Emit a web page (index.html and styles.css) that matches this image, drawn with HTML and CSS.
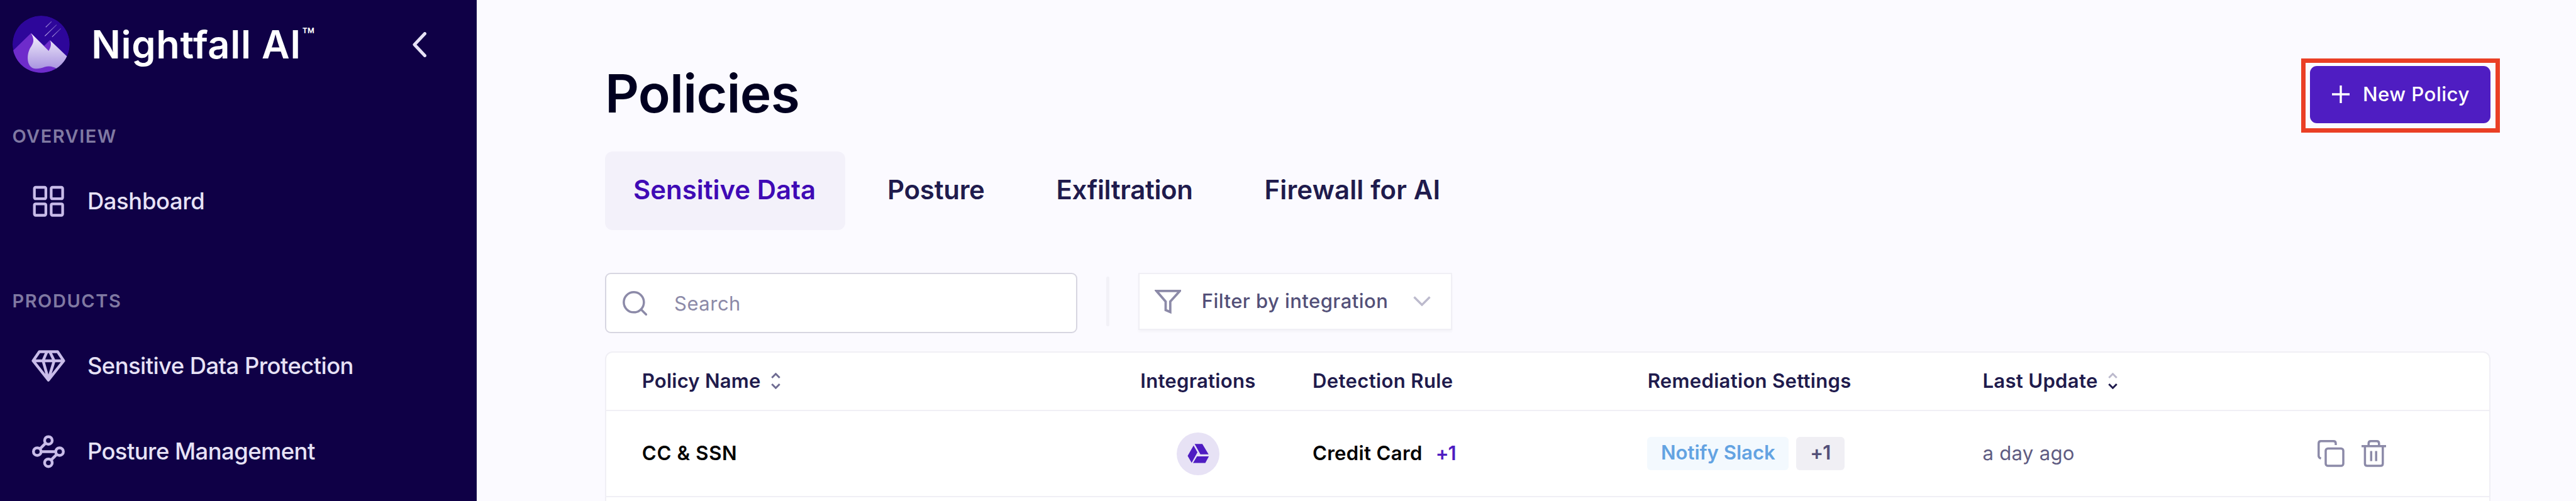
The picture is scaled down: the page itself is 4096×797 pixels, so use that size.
FILE: index.html
```html
<!DOCTYPE html>
<html lang="en">
<head>
<meta charset="utf-8">
<title>Policies – Nightfall AI</title>
<link rel="stylesheet" href="styles.css">
</head>
<body>
<div class="app">
  <aside class="sidebar">
    <header class="brand">
      <svg class="brand-logo" viewBox="24 32 384 384">
        <defs>
          <linearGradient id="snow" x1="0" y1="0" x2="0" y2="1"><stop offset="0" stop-color="#f6f3fd"/><stop offset="1" stop-color="#a994e0"/></linearGradient>
          <linearGradient id="trail" gradientUnits="userSpaceOnUse" x1="255" y1="160" x2="330" y2="90"><stop offset="0" stop-color="#b7a4e6"/><stop offset="1" stop-color="#5a3db4"/></linearGradient>
          <clipPath id="disc"><circle cx="216" cy="224" r="192"/></clipPath>
        </defs>
        <g clip-path="url(#disc)">
          <circle cx="216" cy="224" r="192" fill="#2d069a"/>
          <path d="M24 270L148 149L200 200L237 234L275 196L300 230V380L320 390V420H24z" fill="#6e2ccb"/>
          <path d="M148 149L267 269C282 240 286 225 277 198L390 306Q370 355 322 390C300 375 270 366 240 377C210 388 190 392 165 386C120 372 116 300 142 250C160 222 178 200 148 149z" fill="url(#snow)"/>
          <path d="M247 109L286 71M241 169L320 93M290 174L348 118" stroke="url(#trail)" stroke-width="5" fill="none"/>
        </g>
      </svg>
      <span class="brand-name">Nightfall AI</span><span class="brand-tm">™</span>
      <svg class="collapse" viewBox="0 0 22 40"><path d="M19.5 2.5L3 20L19.5 37.5"/></svg>
    </header>
    <h2 class="nav-label">OVERVIEW</h2>
    <a class="nav-item nav-dashboard">
      <svg class="nav-icon" viewBox="0 0 54.4 54.4"><g><rect x="4.7" y="5" width="18.2" height="18.2" rx="2"/><rect x="31.4" y="5" width="18.2" height="18.2" rx="2"/><rect x="4.7" y="31.3" width="18.2" height="18.2" rx="2"/><rect x="31.4" y="31.3" width="18.2" height="18.2" rx="2"/></g></svg>
      <span>Dashboard</span>
    </a>
    <h2 class="nav-label nav-label-products">PRODUCTS</h2>
    <a class="nav-item">
      <svg class="nav-icon wide" viewBox="30 40 230 230"><path d="M83 59H206L247 120L144 250L41 120zM41 120H247M133 62L108 120L144 246L183 120L155 62"/></svg>
      <span class="tight">Sensitive Data Protection</span>
    </a>
    <a class="nav-item">
      <svg class="nav-icon wide" viewBox="30 610 230 230"><circle cx="144" cy="651" r="25.5"/><circle cx="69" cy="726" r="25.5"/><circle cx="219" cy="726" r="25.5"/><circle cx="144" cy="801" r="25.5"/><path d="M126 669L87 708M95 726H193M201 744L162 783"/></svg>
      <span class="tight">Posture Management</span>
    </a>
  </aside>

  <main class="main">
    <div class="page-head">
      <h1>Policies</h1>
      <button class="new-policy">
        <svg class="plus" viewBox="0 0 28 28"><path d="M14 0V28M0 14H28"/></svg>
        <span>New Policy</span>
      </button>
    </div>

    <nav class="tabs">
      <a class="tab active">Sensitive Data</a>
      <a class="tab posture">Posture</a>
      <a class="tab exfil">Exfiltration</a>
      <a class="tab firewall">Firewall for AI</a>
    </nav>

    <div class="toolbar">
      <div class="search">
        <svg class="search-icon" viewBox="0 0 40 40"><circle cx="18.3" cy="18.3" r="16.4"/><path d="M30 30L38.3 38.3"/></svg>
        <span>Search</span>
      </div>
      <div class="divider"></div>
      <div class="filter">
        <svg class="funnel" viewBox="30 110 180 175"><path d="M42 126H200L135 198V268L104 255V198z"/></svg>
        <span>Filter by integration</span>
        <svg class="chevron" viewBox="0 0 28 16"><path d="M1.5 1.5L14 14L26.5 1.5"/></svg>
      </div>
    </div>

    <section class="table">
      <div class="row head">
        <div class="cell"><span class="t-name">Policy Name</span>
          <svg class="sort" viewBox="0 0 15 26"><path d="M1.3 8L7.5 1.8L13.7 8M1.3 18L7.5 24.2L13.7 18" stroke="#706d93"/></svg></div>
        <div class="cell t-int">Integrations</div>
        <div class="cell t-rule">Detection Rule</div>
        <div class="cell t-rem">Remediation Settings</div>
        <div class="cell"><span class="t-upd">Last Update</span>
          <svg class="sort" viewBox="0 0 15 26"><path d="M1.3 8L7.5 1.8L13.7 8" stroke="#bcbacd"/><path d="M1.3 18L7.5 24.2L13.7 18" stroke="#1f1b4d"/></svg></div>
        <div></div>
      </div>
      <div class="row body">
        <div class="cell t-cc">CC &amp; SSN</div>
        <div class="cell"><div class="app-badge"><svg viewBox="240 1150 155 145"><path d="M293 1159H345L387 1229H332zM286 1170L312 1215L273 1286L246 1240zM309 1243H389L365 1288H282z"/></svg></div></div>
        <div class="cell"><span class="t-card">Credit Card</span><span class="more">+1</span></div>
        <div class="cell"><span class="chip slack">Notify Slack</span><span class="chip count">+1</span></div>
        <div class="cell date">a day ago</div>
        <div class="cell actions">
          <svg class="act" viewBox="0 0 43 43"><path d="M29 8V5.5Q29 1.8 25.3 1.8H5.5Q1.8 1.8 1.8 5.5V25.3Q1.8 28 5.5 29.5"/><rect x="13" y="13.5" width="28" height="27.6" rx="3.6"/></svg>
          <svg class="act trash" viewBox="0 0 39 43"><path d="M0 9.7H39M11.2 9V5.5Q11.2 1.8 14.9 1.8H24.1Q27.8 1.8 27.8 5.5V9M5.4 10V37.5Q5.4 41.1 9 41.1H30.2Q33.8 41.1 33.8 37.5V10M15.3 17.5V33.5M23.2 17.5V33.5"/></svg>
        </div>
      </div>
      <div class="row rest"></div>
    </section>
  </main>
</div>
</body>
</html>
```
FILE: styles.css
```css
* { box-sizing: border-box; }
body { margin: 0; background: #fbfaff; font-family: Inter, "Liberation Sans", sans-serif; font-weight: 500; }
svg { display: block; flex: none; fill: none; }
h1, h2 { margin: 0; }
span { white-space: nowrap; }
.app { display: flex; width: 4096px; height: 797px; overflow: hidden; }

.sidebar { flex: none; width: 757.5px; background: #0f0046; display: flex; flex-direction: column; }
.brand { height: 141.4px; flex: none; display: flex; align-items: center; padding-left: 20px; }
.brand-logo { width: 90.8px; height: 90.8px; }
.brand-name { margin-left: 34.4px; font-size: 61.3px; font-weight: 600; letter-spacing: .7px; color: #fff; }
.brand-tm { margin: 0 auto 0 1px; font-size: 33px; line-height: 36px; color: #fff; padding-bottom: 29px; }
.collapse { width: 22px; height: 40px; margin-right: 79.5px; }
.collapse path { stroke: #e7e2f6; stroke-width: 5; stroke-linecap: round; stroke-linejoin: round; }
.nav-label { height: 60px; line-height: 61px; margin-top: 45.1px; padding-left: 19.4px; font-size: 29px; font-weight: 600; letter-spacing: 1.5px; color: #8079a2; }
.nav-label-products { margin-top: 59px; letter-spacing: 1.55px; }
.nav-item { height: 136.2px; display: flex; align-items: center; padding-left: 49.6px; gap: 34.9px; font-size: 36.4px; letter-spacing: -.35px; color: #e7e2f6; }
.nav-dashboard { margin-top: 5.9px; }
.nav-label-products + .nav-item { margin-top: 6.5px; }
.tight { letter-spacing: -.55px; }
.nav-icon { width: 54.4px; height: 54.4px; stroke: #c9bce9; stroke-width: 4.3; stroke-linejoin: round; }
.nav-icon.wide { stroke-width: 19; }

.main { flex: 1; display: flex; flex-direction: column; padding: 0 136.3px 0 204.5px; }
.page-head { display: flex; justify-content: space-between; align-items: flex-start; height: 240.9px; }
h1 { font-size: 83.9px; line-height: 100px; font-weight: 600; letter-spacing: -.75px; color: #010020; margin-top: 99px; margin-left: 0; }
.new-policy { position: relative; margin-top: 104.7px; width: 286.9px; height: 91px; border: 0; border-radius: 11px; background: #4f1dc2; color: #fff; font: 500 31.2px/40px Inter, sans-serif; display: flex; align-items: center; padding: 0 0 1px 35px; gap: 21.2px; letter-spacing: .45px; }
.new-policy::after { content: ""; position: absolute; inset: -11.8px -14.9px -15.8px -13.6px; border: 7.1px solid #ea3f25; }
.plus { width: 28px; height: 28px; stroke: #fff; stroke-width: 3.4; }

.tabs { display: flex; height: 125px; font-size: 41.95px; font-weight: 600; color: #1f1b4d; }
.tab { height: 125px; display: flex; align-items: center; padding: 0 45.4px 4px; border-radius: 12px; white-space: nowrap; }
.tab.active { width: 381.5px; margin-right: 22.2px; padding-left: 45px; background: #f3f1fa; color: #3f0ab5; }
.tab.posture { width: 246.3px; margin-right: 22.2px; letter-spacing: -.25px; }
.tab.exfil { width: 307.5px; margin-right: 23.5px; letter-spacing: -.35px; }
.tab.firewall { letter-spacing: .15px; }

.toolbar { display: flex; align-items: flex-start; margin-top: 68.1px; height: 124.9px; font-size: 31px; }
.search { width: 751.4px; height: 96.4px; border: 2.8px solid #d7d6e1; border-radius: 9px; background: #fff; display: flex; align-items: center; padding-left: 25.9px; gap: 43.2px; color: #8c8aa8; font-weight: 400; letter-spacing: .5px; }
.search-icon { width: 39px; height: 39px; stroke: #8c8aa8; stroke-width: 3.6; stroke-linecap: round; }
.divider { margin: 5.6px 45.2px 0 45.3px; width: 5.7px; height: 79.4px; border-radius: 3px; background: #f2f1f7; }
.filter { width: 499.6px; height: 90.7px; border: 2.8px solid #f0eff5; background: #fff; box-shadow: 0 3px 4px rgba(31, 27, 77, .03); display: flex; align-items: center; padding-left: 24.3px; color: #535078; letter-spacing: .45px; }
.filter span { margin-left: 32.4px; margin-right: auto; padding-bottom: 2px; }
.funnel { width: 42.5px; height: 41.4px; stroke: #8c8aa8; stroke-width: 16; }
.chevron { width: 28px; height: 16px; margin-right: 32.5px; stroke: #bcbacd; stroke-width: 3.4; }

.table { border: 2.8px solid #f0eff5; border-bottom: 0; border-radius: 12px 12px 0 0; background: #fff; overflow: hidden; flex: 1; font-size: 31.1px; font-weight: 600; }
.row { display: grid; grid-template-columns: 792.5px 273.6px 532.8px 532.7px 532.4px auto; padding-left: 56.8px; border-bottom: 2.9px solid #f0eff5; }
.row.rest { border: 0; }
.cell { display: flex; align-items: center; white-space: nowrap; }
.head { height: 93.6px; padding-bottom: 2px; color: #1f1b4d; }
.body { height: 136.1px; color: #000; }
.sort { width: 15px; height: 26px; margin-left: 16px; stroke-width: 3; }
.t-name { letter-spacing: .2px; }
.t-int { letter-spacing: .25px; }
.t-rule { letter-spacing: .35px; }
.t-rem { letter-spacing: .28px; }
.t-upd { letter-spacing: .3px; }
.t-cc { letter-spacing: .67px; }
.t-card { letter-spacing: .33px; }
.body .t-cc, .t-card, .more { padding-bottom: 2px; }
.more { margin-left: 21px; letter-spacing: -1px; color: #4f1dc2; }
.app-badge { width: 68px; height: 68px; margin-left: 57.8px; border-radius: 50%; background: #e7e2f5; display: flex; align-items: center; justify-content: center; }
.app-badge svg { width: 36.6px; height: 34.3px; fill: #4f1dc2; }
.chip { height: 53.9px; line-height: 51.9px; border-radius: 6px; text-align: center; font-size: 31.1px; }
.chip.slack { width: 225.3px; background: #f3f9fe; color: #63a3e2; margin-left: -.5px; }
.chip.count { width: 76.6px; margin-left: 11.5px; background: #f0eff4; color: #535078; letter-spacing: -1px; }
.date { font-weight: 400; letter-spacing: .3px; color: #5f5c82; padding-bottom: 2px; }
.act { width: 43px; height: 43px; stroke: #8c8aa8; stroke-width: 3.5; }
.act.trash { width: 39px; margin-left: 27px; }
```
